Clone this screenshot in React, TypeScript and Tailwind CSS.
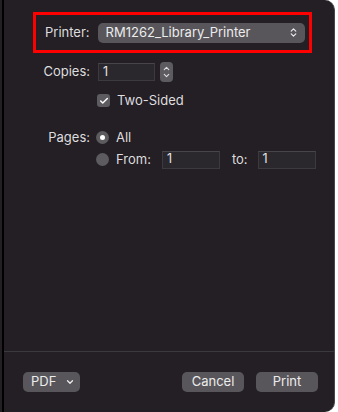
import { Check, ChevronDown, ChevronUp, ChevronsUpDown } from 'lucide-react'

const font = { fontFamily: '"Inter", "Liberation Sans", sans-serif' }

function Field({ value, className }: { value: string; className: string }) {
  return (
    <div
      className={`h-[18px] bg-[#2b282d] border border-[#3d3a3f] border-t-[#47444a] flex items-center px-[4px] text-[12.5px] text-[#e6e6e6] ${className}`}
    >
      {value}
    </div>
  )
}

function Radio({ on }: { on: boolean }) {
  return (
    <div className="w-[13px] h-[13px] rounded-full bg-[#5d5b5f] flex items-center justify-center">
      {on && <div className="w-[5px] h-[5px] rounded-full bg-white" />}
    </div>
  )
}

export default function App() {
  return (
    <div className="w-[338px] h-[412px] bg-white" style={font}>
      <div className="w-[335px] h-[412px] bg-[#231f24] rounded-r-[10px] border-r border-[#4a474c] flex text-[#dedcdf]">
        <div className="w-[2px] bg-[#231f24]" />
        <div className="w-[2px] bg-black" />
        <div className="flex-1 flex flex-col">
          {/* printer row, boxed in red */}
          <div className="mt-[12px] ml-[29px] w-[279px] h-[41px] border-[3px] border-[#ff0000] flex items-center">
            <span className="ml-[9px] text-[13px]">Printer:</span>
            <div className="ml-[8px] w-[207px] h-[20px] rounded-[5px] bg-[#58565b] flex items-center pl-[8px] pr-[6px] text-[13px] text-[#ececec]">
              <span className="flex-1">RM1262_Library_Printer</span>
              <ChevronsUpDown size={11} strokeWidth={2.5} />
            </div>
          </div>

          {/* copies */}
          <div className="mt-[9px] flex items-center h-[20px]">
            <span className="w-[86px] text-right text-[13px]">Copies:</span>
            <Field value="1" className="ml-[8px] w-[57px]" />
            <div className="ml-[5px] w-[13px] h-[20px] rounded-[4px] bg-[#5d5b5f] flex flex-col items-center justify-center">
              <ChevronUp size={9} strokeWidth={3} className="-mb-[1px]" />
              <ChevronDown size={9} strokeWidth={3} className="-mt-[1px]" />
            </div>
          </div>

          {/* two-sided */}
          <div className="mt-[9px] ml-[93px] flex items-center">
            <div className="w-[13px] h-[13px] rounded-[3px] bg-[#5d5b5f] flex items-center justify-center">
              <Check size={10} strokeWidth={3.5} className="text-white" />
            </div>
            <span className="ml-[7px] text-[13px]">Two-Sided</span>
          </div>

          {/* pages */}
          <div className="mt-[17px] flex items-center">
            <span className="w-[86px] text-right text-[13px]">Pages:</span>
            <div className="ml-[6px]">
              <Radio on />
            </div>
            <span className="ml-[7px] text-[13px]">All</span>
          </div>
          <div className="mt-[3px] flex items-center">
            <div className="ml-[92px]">
              <Radio on={false} />
            </div>
            <span className="ml-[7px] text-[13px]">From:</span>
            <Field value="1" className="ml-[11px] w-[58px]" />
            <span className="ml-[12px] text-[13px]">to:</span>
            <Field value="1" className="ml-[10px] w-[58px]" />
          </div>

          <div className="flex-1" />
          <div className="h-px bg-[#3c393e]" />

          {/* bottom buttons */}
          <div className="h-[60px] flex items-center">
            <div className="ml-[19px] w-[57px] h-[20px] rounded-[5px] bg-[#58565b] flex items-center pl-[8px] text-[13px] text-[#ececec]">
              <span>PDF</span>
              <ChevronDown size={10} strokeWidth={3} className="ml-[9px]" />
            </div>
            <div className="flex-1" />
            <div className="w-[62px] h-[20px] rounded-[5px] bg-[#58565b] flex items-center justify-center text-[13px] text-[#ececec]">
              Cancel
            </div>
            <div className="ml-[12px] mr-[16px] w-[62px] h-[20px] rounded-[5px] bg-[#58565b] flex items-center justify-center text-[13px] text-[#ececec]">
              Print
            </div>
          </div>
        </div>
      </div>
    </div>
  )
}
